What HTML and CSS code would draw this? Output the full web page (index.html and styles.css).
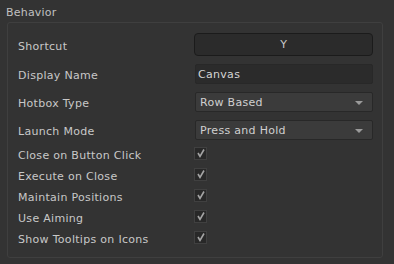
FILE: index.html
```html
<!DOCTYPE html>
<html lang="en">
<head>
    <meta charset="UTF-8">
    <title>Behavior</title>
    <link rel="stylesheet" href="styles.css">
</head>
<body>
    <div class="section-title">Behavior</div>

    <!-- group box -->
    <div class="group">
        <div class="fields">
            <label class="label">Shortcut</label>
            <button class="shortcut-btn">Y</button>

            <label class="label">Display Name</label>
            <input class="text-field" type="text" value="Canvas">

            <label class="label">Hotbox Type</label>
            <div class="combo">
                <span>Row Based</span>
                <span class="arrow"></span>
            </div>

            <label class="label">Launch Mode</label>
            <div class="combo">
                <span>Press and Hold</span>
                <span class="arrow"></span>
            </div>
        </div>

        <div class="checks">
            <span class="label">Close on Button Click</span>
            <span class="checkbox"><svg width="11" height="11" viewBox="0 0 11 11"><path d="M3 5 L5 8.5 L9 1.5" /></svg></span>

            <span class="label">Execute on Close</span>
            <span class="checkbox"><svg width="11" height="11" viewBox="0 0 11 11"><path d="M3 5 L5 8.5 L9 1.5" /></svg></span>

            <span class="label">Maintain Positions</span>
            <span class="checkbox"><svg width="11" height="11" viewBox="0 0 11 11"><path d="M3 5 L5 8.5 L9 1.5" /></svg></span>

            <span class="label">Use Aiming</span>
            <span class="checkbox"><svg width="11" height="11" viewBox="0 0 11 11"><path d="M3 5 L5 8.5 L9 1.5" /></svg></span>

            <span class="label">Show Tooltips on Icons</span>
            <span class="checkbox"><svg width="11" height="11" viewBox="0 0 11 11"><path d="M3 5 L5 8.5 L9 1.5" /></svg></span>
        </div>
    </div>
</body>
</html>
```

FILE: styles.css
```css
/* Base */
body {
    margin: 0;
    background-color: #333333;
    color: #c8c8c8;
    font-family: "DejaVu Sans", sans-serif;
    font-size: 11px;
    letter-spacing: 0.3px;
    width: 394px;
    height: 264px;
    overflow: hidden;
}

.section-title {
    padding: 6px 0 0 6px;
    height: 16px;
    line-height: 13px;
    color: #c0c0c0;
    letter-spacing: 0.2px;
}

/* group box */
.group {
    margin: 0 0 0 7px;
    width: 376px;
    height: 236px;
    border: 1px solid #3f3f3f;
    border-radius: 3px;
    padding: 10px 11px 0 10px;
    box-sizing: border-box;
}

.fields {
    display: grid;
    grid-template-columns: 176px 179px;
    grid-template-rows: 23px 20px 20px 20px;
    row-gap: 8px;
    align-items: center;
}

.checks {
    display: grid;
    grid-template-columns: 176px 179px;
    grid-auto-rows: 21px;
    align-items: center;
    margin-top: 3px;
}

.label {
    line-height: 14px;
    padding-top: 4px;
}

/* controls */
.shortcut-btn {
    height: 23px;
    margin: 0;
    padding: 0;
    background-color: #2b2b2b;
    border: 1px solid #1b1b1b;
    border-radius: 4px;
    color: #c8c8c8;
    font-family: inherit;
    font-size: 11px;
}

.text-field {
    height: 20px;
    margin: 0 0 0 1px;
    width: 178px;
    box-sizing: border-box;
    padding: 1px 0 0 2px;
    background-color: #2b2b2b;
    border: 1px solid #282828;
    border-radius: 2px;
    color: #d4d4d4;
    font-family: inherit;
    font-size: 11px;
    letter-spacing: 0.3px;
    outline: none;
}

.combo {
    height: 20px;
    margin-left: 1px;
    box-sizing: border-box;
    display: flex;
    align-items: center;
    justify-content: space-between;
    padding: 1px 9px 0 4px;
    background-color: #3b3b3b;
    border: 1px solid #282828;
    border-radius: 2px;
    color: #d0d0d0;
}

.arrow {
    width: 0;
    height: 0;
    border-left: 4px solid transparent;
    border-right: 4px solid transparent;
    border-top: 4px solid #9a9a9a;
}

.checkbox {
    width: 13px;
    height: 13px;
    box-sizing: border-box;
    background-color: #282828;
    border: 1px solid #404040;
    display: flex;
}

.checkbox svg {
    fill: none;
    stroke: #a4a4a4;
    stroke-width: 1.6;
}
```
